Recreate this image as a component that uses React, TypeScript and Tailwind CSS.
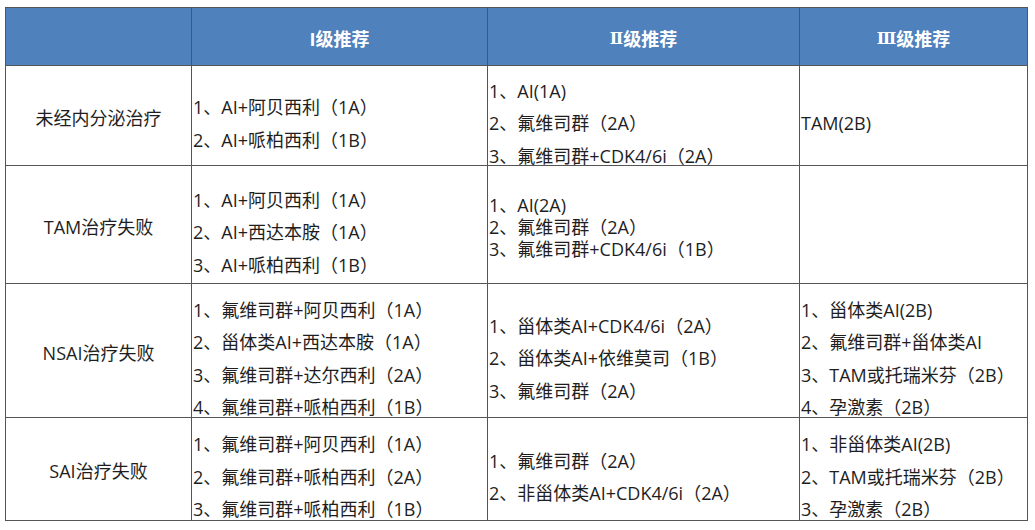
type Row = {
  label: string
  cells: string[][]
  height: string
}

const HEADERS = [
  { num: 'I', rest: '级推荐' },
  { num: 'Ⅱ', rest: '级推荐' },
  { num: 'Ⅲ', rest: '级推荐' },
]

const ROWS: Row[] = [
  {
    label: '未经内分泌治疗',
    height: 'h-[100px]',
    cells: [
      ['1、AI+阿贝西利（1A）', '2、AI+哌柏西利（1B）'],
      ['1、AI(1A)', '2、氟维司群（2A）', '3、氟维司群+CDK4/6i（2A）'],
      ['TAM(2B)'],
    ],
  },
  {
    label: 'TAM治疗失败',
    height: 'h-[118px]',
    cells: [
      ['1、AI+阿贝西利（1A）', '2、AI+西达本胺（1A）', '3、AI+哌柏西利（1B）'],
      ['1、AI(2A)', '2、氟维司群（2A）', '3、氟维司群+CDK4/6i（1B）'],
      [],
    ],
  },
  {
    label: 'NSAI治疗失败',
    height: 'h-[134px]',
    cells: [
      [
        '1、氟维司群+阿贝西利（1A）',
        '2、甾体类AI+西达本胺（1A）',
        '3、氟维司群+达尔西利（2A）',
        '4、氟维司群+哌柏西利（1B）',
      ],
      ['1、甾体类AI+CDK4/6i（2A）', '2、甾体类AI+依维莫司（1B）', '3、氟维司群（2A）'],
      ['1、甾体类AI(2B)', '2、氟维司群+甾体类AI', '3、TAM或托瑞米芬（2B）', '4、孕激素（2B）'],
    ],
  },
  {
    label: 'SAI治疗失败',
    height: 'h-[103px]',
    cells: [
      ['1、氟维司群+阿贝西利（1A）', '2、氟维司群+哌柏西利（2A）', '3、氟维司群+哌柏西利（1B）'],
      ['1、氟维司群（2A）', '2、非甾体类AI+CDK4/6i（2A）'],
      ['1、非甾体类AI(2B)', '2、TAM或托瑞米芬（2B）', '3、孕激素（2B）'],
    ],
  },
]

// the TAM row, second-level column uses single spacing in the source doc
function isTight(rowIdx: number, colIdx: number) {
  return rowIdx === 1 && colIdx === 1
}

function Lines({ lines, tight }: { lines: string[]; tight: boolean }) {
  if (tight) {
    return (
      <div className="pt-[4px]">
        {lines.map((l) => (
          <div key={l} className="leading-[22px] whitespace-nowrap">
            {l}
          </div>
        ))}
      </div>
    )
  }
  return (
    <div>
      {lines.map((l) => (
        <div key={l} className="h-[32.5px] pt-[15px] leading-[18px] whitespace-nowrap">
          {l}
        </div>
      ))}
    </div>
  )
}

export default function App() {
  return (
    <div className="min-h-[530px] bg-white pl-[5px] pt-[7px] font-['Open_Sans','Noto_Sans_CJK_SC',sans-serif] text-[18px] text-[#1e1e1e]">
      <div className="grid w-[1023px] grid-cols-[186px_296px_312px_228px] border-l border-t border-[#555]">
        <div className="h-[58px] border-b border-r border-[#555] bg-[#4f81bd]" />
        {HEADERS.map((h) => (
          <div
            key={h.num}
            className="flex h-[58px] items-center justify-center border-b border-r border-[#555] bg-[#4f81bd] pt-[4px] font-bold leading-[18px] text-white"
          >
            <span className={h.num === 'I' ? '' : "font-['DejaVu_Serif',serif] text-[16px]"}>{h.num}</span>
            {h.rest}
          </div>
        ))}

        {ROWS.map((row, ri) => (
          <div key={row.label} className="contents">
            <div
              className={`flex ${row.height} items-center justify-center border-b border-r border-[#555] pt-[4px] leading-[18px]`}
            >
              {row.label}
            </div>
            {row.cells.map((lines, ci) => (
              <div
                key={ci}
                className={`flex ${row.height} flex-col justify-center border-b border-r border-[#555] pl-[1px]`}
              >
                <Lines lines={lines} tight={isTight(ri, ci)} />
              </div>
            ))}
          </div>
        ))}
      </div>
    </div>
  )
}
